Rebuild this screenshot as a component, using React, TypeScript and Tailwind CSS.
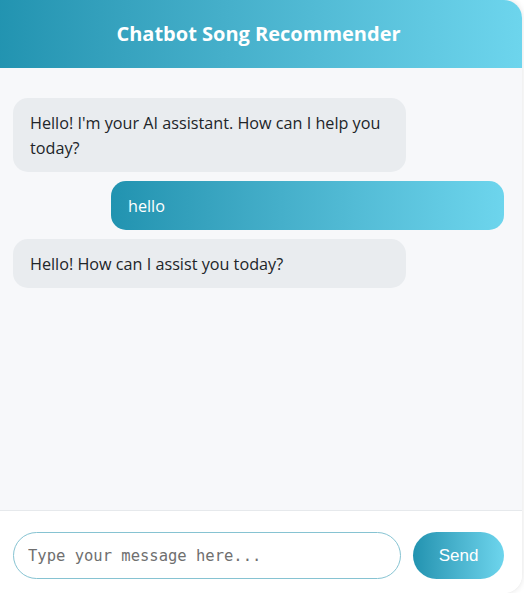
import React, { useState } from "react";

const messages = [
  { from: "bot", text: "Hello! I'm your AI assistant. How can I help you today?" },
  { from: "user", text: "hello" },
  { from: "bot", text: "Hello! How can I assist you today?" },
];

const App = () => {
  const [input, setInput] = useState("");

  return (
    <div className="h-[593px] w-[524px] overflow-hidden bg-white font-['Open_Sans',sans-serif]">
      <div className="-ml-[5px] flex h-[593px] w-[527px] flex-col overflow-hidden rounded-r-[18px] bg-white shadow-[0_0_6px_rgba(0,0,0,0.12)]">
        {/* Header */}
        <div className="flex h-[68px] shrink-0 items-center justify-center bg-gradient-to-r from-[#2193b0] to-[#6dd5ed]">
          <h1 className="text-[20px] font-bold text-white">Chatbot Song Recommender</h1>
        </div>

        {/* Messages */}
        <div className="flex flex-1 flex-col gap-[9px] bg-[#f7f8fa] px-[18px] pt-[30px]">
          {messages.map((m, i) => (
            <div key={i} className={`flex ${m.from === "user" ? "justify-end" : "justify-start"}`}>
              <div
                className={
                  m.from === "user"
                    ? "w-[393px] rounded-[15px] bg-gradient-to-r from-[#2193b0] to-[#6dd5ed] px-[17px] pt-[13px] pb-[11px] text-[16.2px] leading-[25px] text-white"
                    : "w-[393px] rounded-[15px] bg-[#e9ecef] px-[17px] pt-[13px] pb-[11px] text-[16.2px] leading-[25px] text-[#212529]"
                }
              >
                {m.text}
              </div>
            </div>
          ))}
        </div>

        {/* Input */}
        <div className="flex h-[83px] shrink-0 items-start gap-[12px] border-t border-[#e6e9ec] bg-white px-[18px] pt-[21px]">
          <input
            value={input}
            onChange={(e) => setInput(e.target.value)}
            placeholder="Type your message here..."
            className="h-[47px] w-[388px] rounded-full border border-[#86c3d2] px-[14px] font-['DejaVu_Sans_Mono',monospace] text-[15.5px] text-[#333] outline-none placeholder:text-[#6f6f6f]"
          />
          <button className="h-[47px] w-[91px] rounded-full bg-gradient-to-r from-[#2193b0] to-[#6dd5ed] font-['Liberation_Sans',Arial,sans-serif] text-[17px] text-white">
            Send
          </button>
        </div>
      </div>
    </div>
  );
};

export default App;
